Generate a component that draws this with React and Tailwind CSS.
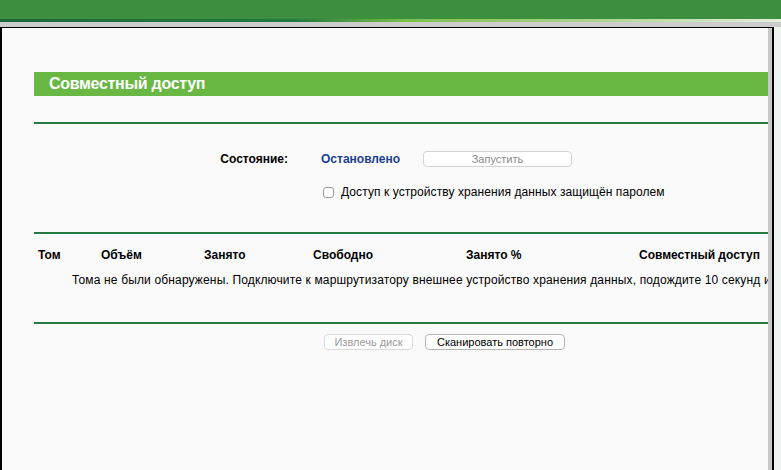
import React from "react";

export default function App() {
  const font = { fontFamily: '"Liberation Sans", Arial, Helvetica, sans-serif' };
  return (
    <div className="w-[781px] h-[470px] flex flex-col overflow-hidden bg-[#eef5ee]" style={font}>
      <div className="h-[19px] bg-[#3d8f40] shrink-0" />
      <div className="h-[3px] shrink-0 bg-[linear-gradient(to_right,#1b6a3a_0%,#217a3c_38%,#7cbf4b_52%,#a9d28b_75%,#e4efdc_100%)]" />
      <div className="h-[5px] bg-[#cdcdcd] shrink-0" />
      <div className="flex flex-1 min-h-0">
        <div className="w-[774px] flex border-l-2 border-t border-r-2 border-black bg-[#fafafa] min-h-0">
          <div className="flex-1 overflow-hidden">
            <div className="w-[900px] pl-[32px] flex flex-col">
              {/* Title */}
              <div className="mt-[44px] h-[24px] bg-[#68b843] flex items-center pl-[15px]">
                <span className="text-white font-bold text-[16px] tracking-[-0.3px]">Совместный доступ</span>
              </div>
              <div className="mt-[26px] h-[2px] bg-[#237b40]" />

              {/* Status */}
              <div className="mt-[27px] h-[16px] flex items-center text-[12px]">
                <div className="w-[254px] text-right font-bold text-black">Состояние:</div>
                <div className="ml-[33px] w-[102px] font-bold text-[#1b3e96]">Остановлено</div>
                <button className="w-[149px] h-[16px] rounded-[4px] border border-[#d4d4d4] bg-white text-[11px] text-[#8a8a8a] leading-none">
                  Запустить
                </button>
              </div>
              <div className="mt-[17px] h-[16px] flex items-center text-[12px] text-black">
                <span className="ml-[289px] w-[11px] h-[11px] rounded-[3px] border border-[#9a9a9a] bg-white shrink-0" />
                <span className="ml-[7px] tracking-[0.08px]">Доступ к устройству хранения данных защищён паролем</span>
              </div>
              <div className="mt-[32px] h-[2px] bg-[#237b40]" />

              {/* Table header */}
              <div className="mt-[13px] h-[16px] flex items-center text-[12px] font-bold text-black pl-[4px]">
                <div className="w-[63px]">Том</div>
                <div className="w-[103px]">Объём</div>
                <div className="w-[109px]">Занято</div>
                <div className="w-[153px]">Свободно</div>
                <div className="w-[173px]">Занято %</div>
                <div className="whitespace-nowrap">Совместный доступ</div>
              </div>
              <div className="mt-[9px] h-[16px] flex items-center text-[12px] text-black whitespace-nowrap pl-[38px] tracking-[0.15px]">
                Тома не были обнаружены. Подключите к маршрутизатору внешнее устройство хранения данных, подождите 10 секунд и нажмите «Сканировать повторно».
              </div>
              <div className="mt-[34px] h-[2px] bg-[#237b40]" />

              {/* Buttons */}
              <div className="mt-[10px] h-[16px] flex items-center text-[11px]">
                <button className="ml-[290px] w-[89px] h-[16px] rounded-[4px] border border-[#dadada] bg-white text-[#9a9a9a] leading-none">
                  Извлечь диск
                </button>
                <button className="ml-[12px] w-[140px] h-[16px] rounded-[4px] border border-[#b5b5b5] bg-white text-black leading-none">
                  Сканировать повторно
                </button>
              </div>
            </div>
          </div>
          <div className="w-[4px] bg-[#c8c8c8] shrink-0" />
        </div>
        <div className="flex-1 bg-[#eef5ee]" />
      </div>
    </div>
  );
}
